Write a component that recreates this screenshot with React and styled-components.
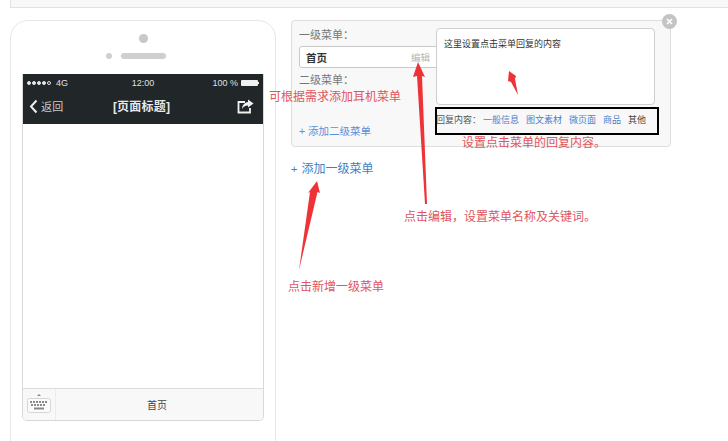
import React from 'react';
import styled, { createGlobalStyle } from 'styled-components';

const GlobalStyle = createGlobalStyle`
    html, body {
        margin: 0;
        padding: 0;
        background: #fff;
    }
    body {
        width: 728px;
        height: 441px;
        overflow: hidden;
        font-family: "Liberation Sans", "Noto Sans CJK SC", sans-serif;
        font-size: 12px;
        color: #333;
    }
`;

const Page = styled.div`
    position: relative;
    width: 728px;
    height: 441px;
    overflow: hidden;
    padding-left: 10px;
    box-sizing: border-box;
`;

const TopBar = styled.div`
    height: 7px;
    background: #f8f8f8;
    border: 1px solid #e3e3e3;
    border-top: 0;
    border-right: 0;
`;

const Columns = styled.div`
    display: flex;
    align-items: flex-start;
    gap: 15px;
    margin-top: 12px;
`;

const Phone = styled.div`
    width: 266px;
    height: 440px;
    flex: none;
    box-sizing: border-box;
    border: 1px solid #e6e6e6;
    border-radius: 18px 18px 0 0;
    padding: 0 11px;
    background: #fff;
`;

const Camera = styled.div`
    width: 9px;
    height: 9px;
    margin: 13px auto 0;
    border-radius: 50%;
    background: #c8c8c8;
`;

const SpeakerRow = styled.div`
    display: grid;
    grid-template-columns: 1fr 45px 1fr;
    align-items: center;
    gap: 9px;
    margin-top: 10px;
    height: 6px;
`;

const SpeakerDot = styled.div`
    width: 6px;
    height: 6px;
    justify-self: end;
    border-radius: 50%;
    background: #d0d0d0;
`;

const Speaker = styled.div`
    height: 6px;
    border-radius: 3px;
    background: #cfcfcf;
`;

const Screen = styled.div`
    margin-top: 15px;
    height: 347px;
    box-sizing: border-box;
    display: flex;
    flex-direction: column;
    border: 1px solid #d8d8d8;
    border-top: 0;
    border-radius: 0 0 5px 5px;
    overflow: hidden;
`;

const Header = styled.div`
    height: 50px;
    margin: 0 -1px;
    flex: none;
    background: #212628;
    color: #dfe1e2;
`;

const StatusBar = styled.div`
    display: grid;
    grid-template-columns: 1fr 1fr 1fr;
    align-items: center;
    height: 16px;
    padding: 1px 5px 0 5px;
    font-size: 9px;
`;

const Signal = styled.div`
    display: flex;
    align-items: center;
    gap: 1px;
`;

const SignalDot = styled.span`
    width: 4px;
    height: 4px;
    box-sizing: border-box;
    border-radius: 50%;
    background: ${(p) => (p.$empty ? 'transparent' : '#e4e4e4')};
    border: 1px solid #e4e4e4;
`;

const Carrier = styled.span`
    margin-left: 4px;
`;

const Clock = styled.div`
    text-align: center;
`;

const Battery = styled.div`
    display: flex;
    align-items: center;
    justify-content: flex-end;
    gap: 3px;
`;

const BatteryCell = styled.span`
    position: relative;
    width: 17px;
    height: 6px;
    margin-right: 1px;
    background: #f0f0f0;
    border-radius: 1px;

    &::after {
        content: '';
        position: absolute;
        right: -1px;
        top: 2px;
        width: 1px;
        height: 2px;
        background: #f0f0f0;
    }
`;

const NavBar = styled.div`
    display: grid;
    grid-template-columns: 60px 1fr 60px;
    align-items: center;
    height: 30px;
    padding: 0 10px 0 7px;
`;

const Back = styled.div`
    display: flex;
    align-items: center;
    gap: 3px;
    font-size: 11px;
    letter-spacing: 0.2px;
    color: #c9cccd;
`;

const Title = styled.div`
    text-align: center;
    font-size: 12px;
    font-weight: 700;
    letter-spacing: 0.2px;
    color: #e8e9ea;
    margin-top: -1px;
`;

const ShareWrap = styled.div`
    display: flex;
    justify-content: flex-end;
`;

const ScreenBody = styled.div`
    flex: 1;
    background: #fff;
`;

const MenuBar = styled.div`
    height: 31px;
    flex: none;
    display: flex;
    background: #f8f8f8;
    border-top: 1px solid #dcdcdc;
`;

const KeyboardSlot = styled.div`
    width: 33px;
    flex: none;
    box-sizing: border-box;
    display: flex;
    align-items: center;
    justify-content: center;
    border-right: 1px solid #ececec;
`;

const MenuItem = styled.div`
    flex: 1;
    display: flex;
    align-items: center;
    justify-content: center;
    padding-right: 5px;
    font-size: 10px;
    color: #444;
`;

const Editor = styled.div`
    width: 380px;
    flex: none;
`;

const Panel = styled.div`
    position: relative;
    display: flex;
    height: 127px;
    box-sizing: border-box;
    background: #f8f8f8;
    border: 1px solid #dedede;
    border-radius: 4px;
`;

const LevelColumn = styled.div`
    width: 144px;
    flex: none;
    padding: 7px 0 0 7px;
    box-sizing: border-box;
`;

const FieldLabel = styled.div`
    font-size: 11px;
    line-height: 14px;
    color: #777;
`;

const MenuInput = styled.div`
    display: flex;
    justify-content: space-between;
    align-items: center;
    height: 22px;
    width: 139px;
    box-sizing: border-box;
    margin: 4px 0 5px;
    padding: 0 6px;
    background: #fff;
    border: 1px solid #c9c9c9;
    border-radius: 3px 0 0 3px;
`;

const InputText = styled.span`
    font-size: 10.5px;
    font-weight: 700;
    color: #333;
`;

const EditLink = styled.span`
    font-size: 9.5px;
    color: #b5b5b5;
    margin-right: 1px;
`;

const AddSub = styled.div`
    margin-top: 36px;
    font-size: 10.5px;
    color: #5b8fd8;
`;

const ReplyColumn = styled.div`
    flex: 1;
    padding: 7px 15px 0 0;
    position: relative;
    z-index: 1;
`;

const ReplyBox = styled.div`
    height: 77px;
    box-sizing: border-box;
    padding: 9px 7px;
    font-size: 9px;
    line-height: 12px;
    color: #333;
    background: #fff;
    border: 1px solid #cfcfcf;
    border-radius: 4px;
`;

const ReplyTypes = styled.div`
    display: flex;
    align-items: center;
    margin-top: 6px;
    height: 16px;
    font-size: 9px;
    white-space: nowrap;
    color: #555;
`;

const ReplyLink = styled.span`
    flex: none;
    margin-right: 7px;
    color: ${(p) => (p.$plain ? '#444' : '#4c80cc')};
`;

const ReplyLabel = styled.span`
    flex: none;
    width: 47px;
`;

const CloseBadge = styled.div`
    position: absolute;
    top: -7px;
    right: -7px;
    width: 15px;
    height: 15px;
    border-radius: 50%;
    display: flex;
    align-items: center;
    justify-content: center;
    background: #c4c4c4;
    z-index: 2;
`;

const AddTop = styled.div`
    margin-top: 14px;
    font-size: 12px;
    line-height: 16px;
    color: #3f7fc4;
`;

const PlusSign = styled.span`
    font-size: 11px;
    margin-right: 4px;
`;

const Highlight = styled.div`
    position: absolute;
    left: 435px;
    top: 107px;
    width: 224px;
    height: 28px;
    box-sizing: border-box;
    border: 2px solid #000;
    z-index: 3;
`;

const Note = styled.div`
    position: absolute;
    left: ${(p) => p.$x}px;
    top: ${(p) => p.$y}px;
    font-size: 12px;
    line-height: 16px;
    color: #e05560;
    white-space: nowrap;
    z-index: 4;
`;

const Arrows = styled.svg`
    position: absolute;
    left: 0;
    top: 0;
    z-index: 5;
    pointer-events: none;
`;

const ChevronLeft = () => (
    <svg width="9" height="15" viewBox="0 0 9 15">
        <path d="M7.5 1.5 L2 7.5 L7.5 13.5" fill="none" stroke="#eceded" strokeWidth="2" />
    </svg>
);

const ShareIcon = () => (
    <svg width="17" height="15" viewBox="0 0 17 15">
        <path d="M8 3 H1.5 V13.5 H13 V9" fill="none" stroke="#f2f2f2" strokeWidth="1.8" />
        <path d="M11 0.5 L16.5 4.5 L11 8.5 V6.4 C8 6.4 6.2 7.6 5 10 C5.2 6.2 7.6 3.4 11 3 Z" fill="#f2f2f2" />
    </svg>
);

const KeyboardIcon = () => (
    <svg width="24" height="24" viewBox="0 0 24 24">
        <path d="M10 3 L12 1 L14 3 Z" fill="#888" />
        <rect x="0.5" y="5.5" width="23" height="14" rx="2" fill="#fbfbfb" stroke="#d6d6d6" />
        <g fill="#8a8a8a">
            <rect x="3" y="8" width="2" height="2" />
            <rect x="6" y="8" width="2" height="2" />
            <rect x="9" y="8" width="2" height="2" />
            <rect x="12" y="8" width="2" height="2" />
            <rect x="15" y="8" width="2" height="2" />
            <rect x="18" y="8" width="2" height="2" />
            <rect x="4" y="11" width="2" height="2" />
            <rect x="7" y="11" width="2" height="2" />
            <rect x="10" y="11" width="2" height="2" />
            <rect x="13" y="11" width="2" height="2" />
            <rect x="16" y="11" width="2" height="2" />
            <rect x="7" y="14.5" width="10" height="2" />
        </g>
    </svg>
);

const CloseIcon = () => (
    <svg width="7" height="7" viewBox="0 0 7 7">
        <path d="M1 1 L6 6 M6 1 L1 6" stroke="#fff" strokeWidth="1.6" />
    </svg>
);

const replyTypes = ['一般信息', '图文素材', '微页面', '商品'];

export default function App() {
    return (
        <>
            <GlobalStyle />
            <Page>
                <TopBar />
                <Columns>
                    <Phone>
                        <Camera />
                        <SpeakerRow>
                            <SpeakerDot />
                            <Speaker />
                        </SpeakerRow>
                        <Screen>
                            <Header>
                                <StatusBar>
                                    <Signal>
                                        <SignalDot />
                                        <SignalDot />
                                        <SignalDot />
                                        <SignalDot />
                                        <SignalDot $empty />
                                        <Carrier>4G</Carrier>
                                    </Signal>
                                    <Clock>12:00</Clock>
                                    <Battery>
                                        100 %
                                        <BatteryCell />
                                    </Battery>
                                </StatusBar>
                                <NavBar>
                                    <Back>
                                        <ChevronLeft />
                                        返回
                                    </Back>
                                    <Title>[页面标题]</Title>
                                    <ShareWrap>
                                        <ShareIcon />
                                    </ShareWrap>
                                </NavBar>
                            </Header>
                            <ScreenBody />
                            <MenuBar>
                                <KeyboardSlot>
                                    <KeyboardIcon />
                                </KeyboardSlot>
                                <MenuItem>首页</MenuItem>
                            </MenuBar>
                        </Screen>
                    </Phone>
                    <Editor>
                        <Panel>
                            <LevelColumn>
                                <FieldLabel>一级菜单：</FieldLabel>
                                <MenuInput>
                                    <InputText>首页</InputText>
                                    <EditLink>编辑</EditLink>
                                </MenuInput>
                                <FieldLabel>二级菜单：</FieldLabel>
                                <AddSub>+ 添加二级菜单</AddSub>
                            </LevelColumn>
                            <ReplyColumn>
                                <ReplyBox>这里设置点击菜单回复的内容</ReplyBox>
                                <ReplyTypes>
                                    <ReplyLabel>回复内容：</ReplyLabel>
                                    {replyTypes.map((t) => (
                                        <ReplyLink key={t}>{t}</ReplyLink>
                                    ))}
                                    <ReplyLink $plain>其他</ReplyLink>
                                </ReplyTypes>
                            </ReplyColumn>
                            <CloseBadge>
                                <CloseIcon />
                            </CloseBadge>
                        </Panel>
                        <AddTop>
                            <PlusSign>+</PlusSign>添加一级菜单
                        </AddTop>
                    </Editor>
                </Columns>

                <Highlight />
                <Note $x={269} $y={89}>可根据需求添加耳机菜单</Note>
                <Note $x={462} $y={135}>设置点击菜单的回复内容。</Note>
                <Note $x={404} $y={209}>点击编辑，设置菜单名称及关键词。</Note>
                <Note $x={288} $y={279}>点击新增一级菜单</Note>

                <Arrows width="728" height="441" viewBox="0 0 728 441">
                    <polygon points="418,62 425,77 422,76 427,204 425,204 417,76 413,77" fill="#ee3338" />
                    <polygon points="509,71 516,76 515,79 518,95 511,82 508,81" fill="#ee3338" />
                    <polygon points="317,181 320,193 317.5,192 299,270 310,192 308,193" fill="#ee3338" />
                </Arrows>
            </Page>
        </>
    );
}
